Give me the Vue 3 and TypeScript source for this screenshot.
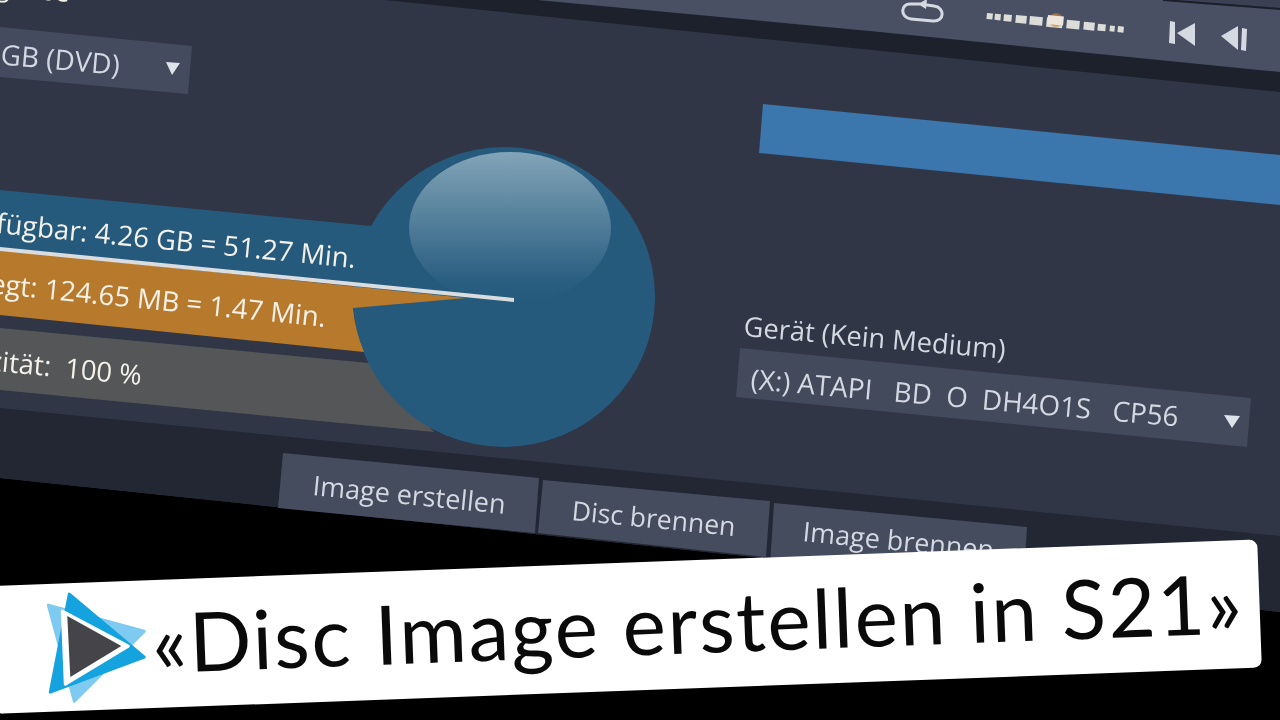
<template>
  <div class="stage">
    <svg class="scene" viewBox="0 0 1280 720" width="1280" height="720">
      <defs>
        <linearGradient id="gloss" x1="0" y1="0" x2="0" y2="1">
          <stop offset="0" stop-color="#82a4b7" />
          <stop offset="0.85" stop-color="#2a5e81" />
          <stop offset="1" stop-color="#265a7d" />
        </linearGradient>
      </defs>

      <rect width="1280" height="720" fill="#000" />
      <polygon points="0,0 1280,0 1280,612 0,478" fill="#303646" />
      <polygon points="0,408 1280,536 1280,612 0,478" fill="#222733" />

      <!-- top toolbar -->
      <polygon points="385,0 1280,0 1280,92" fill="#1c212c" />
      <polygon points="537,0 1163,0 1280,8 1280,72 880,32" fill="#495064" />
      <polygon points="1163,0 1280,0 1280,8" fill="#3a4152" />
      <polyline points="1163,0 1280,9" fill="none" stroke="#1a1f2a" stroke-width="2" />
      <g fill="none" stroke="#d5dae2" stroke-width="3" stroke-linecap="round" stroke-linejoin="round">
        <path d="M920 4 L911 4 C900 3 900 18 911 19 L933 21 C945 22 945 7 934 6 L927 5" />
      </g>
      <polygon points="918,4 927,-1 926,9" fill="#d5dae2" />
      <rect
        v-for="s in sliderSegments"
        :key="s.x"
        class="seg"
        :x="s.x"
        :y="s.y"
        :width="s.w"
        :height="s.h"
        :transform="`rotate(5.5 ${s.x} ${s.y})`"
      />
      <circle cx="1056" cy="20" r="7" fill="#c9822f" opacity="0.65" />
      <rect x="1048" y="15" width="16" height="9" fill="#ece6dc" transform="rotate(5.5 1048 15)" />
      <g fill="#d5dae2">
        <polygon points="1170,21 1175,22 1175,44 1169,43" />
        <polygon points="1177,33 1195,23 1195,46" />
        <polygon points="1221,36 1238,26 1238,50" />
        <polygon points="1242,28 1247,29 1246,51 1241,50" />
      </g>

      <!-- disc size select -->
      <polygon points="0,27 192,46 188,94 0,77" fill="#444b5e" />
      <polygon points="166,62 180,63 172,75" fill="#dfe3ea" />

      <!-- usage bars -->
      <polygon points="0,328 369,363 434,432 0,390" fill="#555658" />
      <polygon points="0,190 371,226 514,300 0,248" fill="#265a7d" />
      <ellipse cx="504" cy="297" rx="151" ry="150" fill="#265a7d" />
      <ellipse cx="510" cy="228" rx="101" ry="76" fill="url(#gloss)" />
      <path d="M0 250 L466 298 L353 308 A151 150 0 0 0 364 352 L0 315 Z" fill="#b77a2c" />
      <polygon points="0,247 514,298 514,302 0,251" fill="#d9dde0" />

      <!-- progress bar -->
      <polygon points="763,104 1280,155 1280,205 759,153" fill="#3b76ac" />

      <!-- device select -->
      <polygon points="740,348 1251,398 1247,447 736,397" fill="#434a5c" />
      <polygon points="1224,415 1240,416 1232,428" fill="#dfe3ea" />

      <!-- tabs -->
      <polygon points="283,453 539,478 535,533 278,508" fill="#454c5e" />
      <polygon points="543,480 770,501 766,557 538,533" fill="#454c5e" />
      <polygon points="774,503 1027,527 1023,590 770,565" fill="#454c5e" />

      <text
        v-for="t in labels"
        :key="t.text"
        class="label"
        :x="t.x"
        :y="t.y"
        :fill="t.fill"
        :font-size="t.size"
        :text-anchor="t.anchor"
        :transform="`rotate(${t.angle} ${t.x} ${t.y})`"
      >{{ t.text }}</text>
    </svg>

    <div class="banner">
      <svg class="logo" viewBox="40 590 110 115" width="110" height="115">
        <path d="M46 606 L142 632 L72 702 Z" fill="#7fcaf0" stroke="#7fcaf0" stroke-width="3" stroke-linejoin="round" />
        <path d="M67 595 L142 658 L48 693 Z" fill="#14a3df" stroke="#14a3df" stroke-width="3" stroke-linejoin="round" />
        <path d="M60 612 L126 647 L63 685 Z" fill="#fff" stroke="#fff" stroke-width="3" stroke-linejoin="round" />
        <path d="M65 617 L119 647 L68 678 Z" fill="#454549" />
      </svg>
      <span class="title">«Disc Image erstellen in S21»</span>
    </div>
  </div>
</template>

<script setup lang="ts">
interface Label {
  text: string
  x: number
  y: number
  angle: number
  size: number
  anchor: 'start' | 'end'
  fill: string
}

const ui = '#d3d8e1'
const bright = '#f3f1ea'

const labels: Label[] = [
  { text: 'Zielgröße', x: 69, y: 2, angle: 5, size: 27, anchor: 'end', fill: bright },
  { text: '4.7 GB (DVD)', x: 119, y: 75, angle: 5, size: 28, anchor: 'end', fill: ui },
  { text: 'Verfügbar: 4.26 GB = 51.27 Min.', x: 355, y: 268, angle: 5.6, size: 27.5, anchor: 'end', fill: bright },
  { text: 'Belegt: 124.65 MB = 1.47 Min.', x: 325, y: 327, angle: 5.8, size: 27.5, anchor: 'end', fill: bright },
  { text: 'Kapazität:  100 %', x: 141, y: 385, angle: 5.5, size: 27.5, anchor: 'end', fill: bright },
  { text: 'Gerät (Kein Medium)', x: 743, y: 336, angle: 5, size: 27.3, anchor: 'start', fill: ui },
  { text: '(X:) ATAPI   BD  O  DH4O1S   CP56', x: 750, y: 389, angle: 5, size: 27.8, anchor: 'start', fill: ui },
  { text: 'Image erstellen', x: 312, y: 495, angle: 5.6, size: 27, anchor: 'start', fill: ui },
  { text: 'Disc brennen', x: 571, y: 520, angle: 5.6, size: 26.6, anchor: 'start', fill: ui },
  { text: 'Image brennen', x: 802, y: 541, angle: 5.6, size: 27, anchor: 'start', fill: ui },
]

// slider ticks, wider towards the centre knob
const sliderSegments = [
  [987, 6], [995, 6], [1004, 8], [1016, 11], [1030, 13], [1047, 16],
  [1067, 13], [1084, 11], [1098, 8], [1110, 5], [1118, 6],
].map(([x, w]) => {
  const h = 4 + w * 0.35
  return { x, w, h, y: 13 + (x - 987) * 0.1 + 3 - h / 2 }
})
</script>

<style scoped>
.stage {
  position: relative;
  width: 1280px;
  height: 720px;
  overflow: hidden;
  background: #000;
}

.scene {
  display: block;
  filter: blur(0.5px);
}

.seg {
  fill: #dcdcd8;
}

.label {
  font-family: "Open Sans", "Noto Sans", sans-serif;
  white-space: pre;
}

.banner {
  position: absolute;
  left: -10px;
  top: 586px;
  width: 1268px;
  height: 128px;
  box-sizing: border-box;
  padding-left: 50px;
  display: flex;
  align-items: center;
  background: #fff;
  border-radius: 8px;
  transform: rotate(-2.1deg);
  transform-origin: 0 0;
}

.logo {
  flex: none;
  transform: rotate(2.1deg);
}

.title {
  font-family: Lato, "Open Sans", sans-serif;
  font-size: 82px;
  letter-spacing: 1.8px;
  line-height: 1;
  margin-top: -6px;
  color: #0a0a0a;
  white-space: nowrap;
}
</style>

<style>
html,
body {
  background: #000;
}
</style>
